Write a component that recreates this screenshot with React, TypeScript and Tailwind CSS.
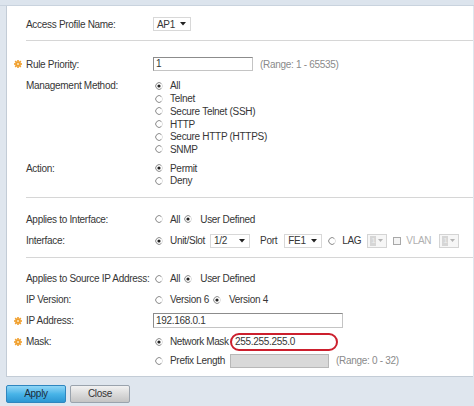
import React from "react";

const font = { fontFamily: '"Liberation Sans", Arial, sans-serif' };

function Gear() {
  return (
    <svg width="8" height="8" viewBox="0 0 8 8" className="shrink-0">
      <g fill="#f0a030">
        <circle cx="4" cy="4" r="2.6" />
        <rect x="3.2" y="0" width="1.6" height="8" />
        <rect x="0" y="3.2" width="8" height="1.6" />
        <rect x="3.2" y="0" width="1.6" height="8" transform="rotate(45 4 4)" />
        <rect x="3.2" y="0" width="1.6" height="8" transform="rotate(-45 4 4)" />
      </g>
      <circle cx="4" cy="4" r="1.1" fill="#fde7b8" />
    </svg>
  );
}

function Radio({ checked = false, className = "" }: { checked?: boolean; className?: string }) {
  return (
    <svg width="8" height="8" viewBox="0 0 8 8" className={`shrink-0 ${className}`}>
      <path d="M6.5 1.6 A3.4 3.4 0 1 0 6.5 6.4" fill="none" stroke="#8a8a8a" strokeWidth="1" />
      <path d="M6.5 6.4 A3.4 3.4 0 0 0 6.5 1.6" fill="none" stroke="#e2e2e2" strokeWidth="1" />
      {checked && <circle cx="4" cy="4" r="1.6" fill="#222" />}
    </svg>
  );
}

function Select({ value, width }: { value: string; width: string }) {
  return (
    <div
      className={`flex h-[14px] items-center justify-between border border-[#d8d8d8] bg-white pl-[3px] pr-[4px] ${width}`}
    >
      <span>{value}</span>
      <svg width="6" height="4" viewBox="0 0 6 4">
        <path d="M0 0 H6 L3 3.5 Z" fill="#222" />
      </svg>
    </div>
  );
}

function DisabledSelect() {
  return (
    <div className="flex h-[14px] w-[20px] items-center justify-between border border-[#d4d4d4] bg-[#f6f6f6] pl-[2px] pr-[3px]">
      <span className="flex h-[10px] w-[6px] items-center justify-center bg-[#d6d6d6] text-[8px] text-[#eeeeee]">
        1
      </span>
      <svg width="5" height="3" viewBox="0 0 5 3">
        <path d="M0 0 H5 L2.5 3 Z" fill="#b4b4b4" />
      </svg>
    </div>
  );
}

function Label({ text, req = false }: { text: string; req?: boolean }) {
  return (
    <div className="flex w-[127px] shrink-0 items-center">
      {req && (
        <span className="-ml-[12px] mr-[4px] flex">
          <Gear />
        </span>
      )}
      <span>{text}</span>
    </div>
  );
}

function Opt({ label, checked = false }: { label: string; checked?: boolean }) {
  return (
    <div className="flex h-[12.7px] items-center pl-[2px]">
      <Radio checked={checked} />
      <span className="ml-[7px]">{label}</span>
    </div>
  );
}

function TwoRadios({ a, b }: { a: string; b: string }) {
  return (
    <div className="flex items-center pl-[2px]">
      <Radio />
      <span className="ml-[7px]">{a}</span>
      <Radio checked className="ml-[4px]" />
      <span className="ml-[8px]">{b}</span>
    </div>
  );
}

export default function App() {
  return (
    <div
      className="h-[406px] w-[474px] overflow-hidden bg-[#dfe6ee] text-[10px] tracking-[-0.3px] text-[#363636]"
      style={font}
    >
      <div className="h-[6px] border-b border-[#c9d3de] bg-[#dce4ed]" />
      <div className="ml-[6px] mr-[1px] border-b border-l border-[#c3ccd6] bg-white">
        {/* profile */}
        <div className="ml-[19px] border-b border-[#d6d6d6] pb-[6px] pt-[8px]">
          <div className="flex h-[20px] items-center">
            <Label text="Access Profile Name:" />
            <Select value="AP1" width="w-[38px]" />
          </div>
        </div>

        {/* rule */}
        <div className="ml-[19px] border-b border-[#d6d6d6] pb-[9.3px] pt-[13px]">
          <div className="flex h-[20px] items-center">
            <Label text="Rule Priority:" req />
            <div className="h-[14px] w-[100px] border border-[#c4c4c4] border-l-[#8c8c8c] border-t-[#8c8c8c] pl-[2px] leading-[12px]">
              1
            </div>
            <span className="ml-[7px] text-[#8a8a8a]">(Range: 1 - 65535)</span>
          </div>
          <div className="mt-[5.6px] flex">
            <div className="flex h-[12.7px] w-[127px] shrink-0 items-center">Management Method:</div>
            <div>
              <Opt label="All" checked />
              <Opt label="Telnet" />
              <Opt label="Secure Telnet (SSH)" />
              <Opt label="HTTP" />
              <Opt label="Secure HTTP (HTTPS)" />
              <Opt label="SNMP" />
            </div>
          </div>
          <div className="mt-[6.2px] flex">
            <div className="flex h-[12.7px] w-[127px] shrink-0 items-center">Action:</div>
            <div>
              <Opt label="Permit" checked />
              <Opt label="Deny" />
            </div>
          </div>
        </div>

        {/* interface */}
        <div className="ml-[19px] border-b border-[#d6d6d6] pb-[6px] pt-[11.6px]">
          <div className="flex h-[20px] items-center">
            <Label text="Applies to Interface:" />
            <TwoRadios a="All" b="User Defined" />
          </div>
          <div className="mt-[1.7px] flex h-[20px] items-center">
            <Label text="Interface:" />
            <div className="flex items-center pl-[2px]">
              <Radio checked />
              <span className="ml-[7px]">Unit/Slot</span>
              <span className="ml-[5px]">
                <Select value="1/2" width="w-[40px]" />
              </span>
              <span className="ml-[10px]">Port</span>
              <span className="ml-[7px]">
                <Select value="FE1" width="w-[38px]" />
              </span>
              <Radio className="ml-[6px]" />
              <span className="ml-[6px]">LAG</span>
              <span className="ml-[6px]">
                <DisabledSelect />
              </span>
              <span className="ml-[6px] h-[8px] w-[8px] border border-[#a8a8a8] bg-[#f4f4f4]" />
              <span className="ml-[5px] text-[#b0b0b0]">VLAN</span>
              <span className="ml-[8px]">
                <DisabledSelect />
              </span>
            </div>
          </div>
        </div>

        {/* source ip */}
        <div className="ml-[19px] pb-[6px] pt-[11px]">
          <div className="flex h-[20px] items-center">
            <Label text="Applies to Source IP Address:" />
            <TwoRadios a="All" b="User Defined" />
          </div>
          <div className="mt-[1px] flex h-[20px] items-center">
            <Label text="IP Version:" />
            <TwoRadios a="Version 6" b="Version 4" />
          </div>
          <div className="mt-[0.7px] flex h-[20px] items-center">
            <Label text="IP Address:" req />
            <div className="h-[15px] w-[190px] border border-[#c4c4c4] border-l-[#8c8c8c] border-t-[#8c8c8c] pl-[2px] leading-[13px]">
              192.168.0.1
            </div>
          </div>
          <div className="mt-[2px] flex h-[18px] items-center">
            <Label text="Mask:" req />
            <div className="flex items-center pl-[2px]">
              <Radio checked />
              <span className="ml-[7px] w-[60px] tracking-[-0.4px]">Network Mask</span>
              <div className="flex h-[18px] w-[108px] items-center rounded-[9px] border-2 border-[#cc1f2d] pl-[3px]">
                255.255.255.0
              </div>
            </div>
          </div>
          <div className="mt-[1px] flex h-[18px] items-center">
            <Label text="" />
            <div className="flex items-center pl-[2px]">
              <Radio />
              <span className="ml-[7px] w-[60px]">Prefix Length</span>
              <div className="h-[14px] w-[99px] border border-[#b8b8b8] bg-[#d9d9d9]" />
              <span className="ml-[7px] text-[#8a8a8a]">(Range: 0 - 32)</span>
            </div>
          </div>
        </div>
      </div>

      {/* buttons */}
      <div className="ml-[6px] mt-[8px] flex gap-[4px]">
        <button className="h-[18px] w-[60px] rounded-[2px] border border-[#2f86bf] bg-gradient-to-b from-[#8fd6f6] via-[#48b4e8] to-[#2c97d3] text-[10px] text-[#1b2b3a]">
          Apply
        </button>
        <button className="h-[18px] w-[60px] rounded-[2px] border border-[#9aa3ad] bg-gradient-to-b from-[#f2f2f2] via-[#dadada] to-[#c4c4c4] text-[10px] text-[#333]">
          Close
        </button>
      </div>
    </div>
  );
}
